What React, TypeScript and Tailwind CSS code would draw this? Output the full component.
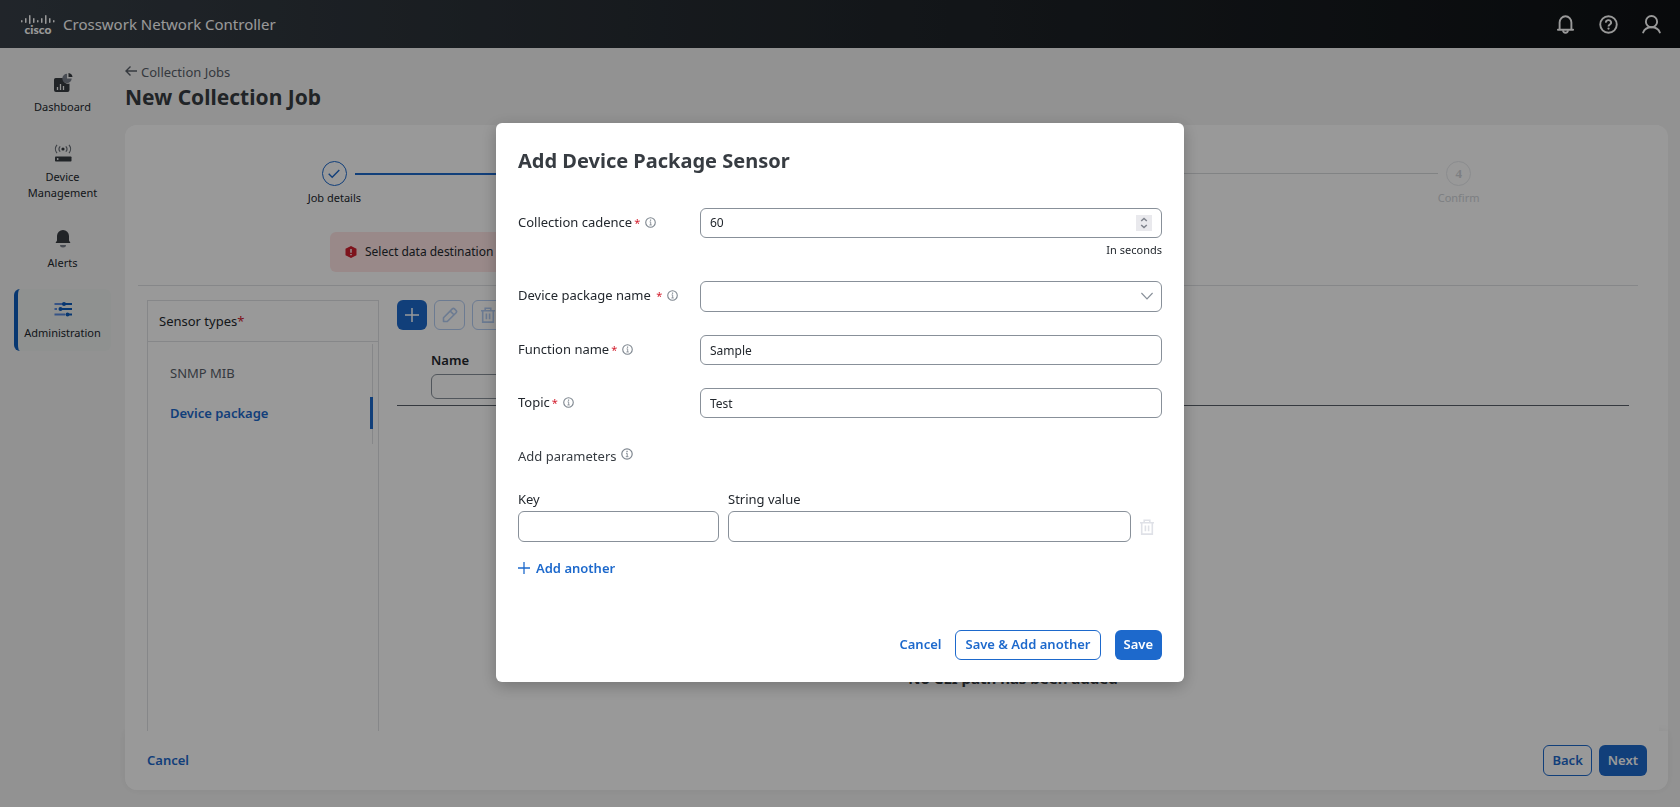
import React from "react";
import clsx from "clsx";

type IconProps = { className?: string };

function CiscoLogo() {
  const bars = [
    { x: 0, y: 5, h: 2.5 },
    { x: 4, y: 3, h: 5 },
    { x: 8, y: 0, h: 9 },
    { x: 12, y: 3, h: 5 },
    { x: 16, y: 5, h: 2.5 },
    { x: 20, y: 3, h: 5 },
    { x: 24, y: 0, h: 9 },
    { x: 28, y: 3, h: 5 },
    { x: 32, y: 5, h: 2.5 },
  ];
  return (
    <span className="flex w-[34px] flex-col items-center gap-px" aria-label="cisco">
      <svg viewBox="0 0 34 9" className="h-[9px] w-[34px]" fill="currentColor">
        {bars.map((b) => (
          <rect key={b.x} x={b.x} y={b.y} width="1.5" height={b.h} rx="0.75" />
        ))}
      </svg>
      <span className="font-['Lato',sans-serif] text-[12px] leading-[9px] font-black">cisco</span>
    </span>
  );
}

function BellIcon({ className }: IconProps) {
  return (
    <svg viewBox="0 0 20 20" className={className} fill="none" stroke="currentColor" strokeWidth="2">
      <path d="M2 15.5h16M3.800 15.200V8a6.200 6.700 0 0 1 12.400 0v7.200" strokeLinecap="round" />
      <path d="M7.400 16c.2 3.600 5 3.600 5.200 0" />
    </svg>
  );
}

function HelpIcon({ className }: IconProps) {
  return (
    <svg viewBox="0 0 20 20" className={className} fill="none" stroke="currentColor" strokeWidth="2">
      <circle cx="10" cy="10" r="8.700" />
      <path d="M7.300 8a2.700 2.500 0 1 1 4 2.100c-.9.5-1.300.8-1.300 1.900" />
      <circle cx="10" cy="14.300" r="1.200" fill="currentColor" stroke="none" />
    </svg>
  );
}

function UserIcon({ className }: IconProps) {
  return (
    <svg viewBox="0 0 20 20" className={className} fill="none" stroke="currentColor" strokeWidth="2">
      <circle cx="10" cy="7" r="5.900" />
      <path d="M1.200 18.400c1.200-3.200 4.500-5.500 8.800-5.500s7.600 2.300 8.800 5.500" strokeLinecap="round" />
    </svg>
  );
}

function InfoIcon({ className }: IconProps) {
  return (
    <svg viewBox="0 0 12 12" className={className} fill="none" stroke="currentColor">
      <circle cx="6" cy="6" r="5.200" strokeWidth="1.200" />
      <path d="M5 5.300H6.200V8.700M4.800 8.700h2.600" strokeWidth="0.9" />
      <rect x="5.400" y="2.800" width="1.300" height="1.300" fill="currentColor" stroke="none" />
    </svg>
  );
}

function TrashIcon({ className }: IconProps) {
  return (
    <svg viewBox="0 0 14 16" className={className} fill="none" stroke="currentColor" strokeWidth="1.600">
      <path d="M0 3.700h14M4.200 3.500V1.200h5.600v2.300M1.700 3.700v11.400h10.600V3.700M5.400 6.500v5.800M8.600 6.500v5.800" />
    </svg>
  );
}

function PencilIcon({ className }: IconProps) {
  return (
    <svg viewBox="0 0 16 16" className={className} fill="none" stroke="currentColor" strokeWidth="1.600" strokeLinejoin="round">
      <path d="M1.500 14.500v-3.800L10.300 1.900a1.600 1.600 0 0 1 2.200 0l1.600 1.600a1.600 1.600 0 0 1 0 2.200L5.300 14.500zM8.300 4.100l3.600 3.600" />
    </svg>
  );
}

function PlusIcon({ className }: IconProps) {
  return (
    <svg viewBox="0 0 14 14" className={className} fill="none" stroke="currentColor" strokeWidth="1.500">
      <path d="M7 0v14M0 7h14" />
    </svg>
  );
}

function DashboardIcon() {
  return (
    <svg viewBox="0 0 20 20" className="h-5 w-5">
      <path
        d="M3.500 5H10a5 5 0 0 0 6.500 5.500V17a2 2 0 0 1-2 2H3a2 2 0 0 1-2-2V7a2 2 0 0 1 2.500-2z"
        fill="#373c42"
      />
      <path d="M4.500 14V17M7.500 11v6M10.500 13v4" stroke="#f4f5f6" strokeWidth="1.300" />
      <path d="M14 .8v4.700h4.700A4.700 4.700 0 1 1 14 .8z" fill="#7b808c" />
      <path d="M15.500 0A4.500 4.500 0 0 1 19.500 4h-4z" fill="#373c42" />
    </svg>
  );
}

function DeviceIcon() {
  return (
    <svg viewBox="0 0 18 18" className="h-[18px] w-[18px]" fill="none">
      <rect x="1" y="12.500" width="16.500" height="5" rx="0.800" fill="#373c42" />
      <circle cx="3.700" cy="15" r="0.900" fill="#f4f5f6" />
      <circle cx="9" cy="5" r="1.600" fill="#373c42" />
      <path
        d="M6.200 2.300a4 4 0 0 0 0 5.400M11.800 2.300a4 4 0 0 1 0 5.400M3 .8a6.500 6.500 0 0 0 0 8.400M15 .8a6.500 6.500 0 0 1 0 8.400"
        stroke="#6a7078"
        strokeWidth="1.200"
      />
    </svg>
  );
}

function AlertsIcon() {
  return (
    <svg viewBox="0 0 18 18" className="h-[18px] w-[18px]">
      <path d="M9 0a6 6 0 0 1 6 6v4.500l1.500 2.500H1.500L3 10.500V6a6 6 0 0 1 6-6z" fill="#373c42" />
      <path d="M6 15h6a3 2.500 0 0 1-6 0z" fill="#7b808c" />
    </svg>
  );
}

function AdminIcon() {
  return (
    <svg viewBox="0 0 18 16" className="h-4 w-[18px]">
      <path d="M.5 3H9M.5 8H3M.5 13.500H11" stroke="#5b8adf" strokeWidth="1.800" />
      <path d="M9 3h9M6 8h12M13 13.500h5" stroke="#0d5cbd" strokeWidth="1.800" />
      <circle cx="10" cy="3" r="2" fill="#0d5cbd" />
      <circle cx="6.500" cy="8" r="2" fill="#0d5cbd" />
      <circle cx="13.500" cy="13.500" r="2" fill="#0d5cbd" />
    </svg>
  );
}

const navItems = [
  { label: "Dashboard", icon: <DashboardIcon /> },
  { label: "Device Management", icon: <DeviceIcon /> },
  { label: "Alerts", icon: <AlertsIcon /> },
  { label: "Administration", icon: <AdminIcon />, active: true },
];

function Header() {
  return (
    <header className="flex h-12 shrink-0 items-center justify-between bg-linear-to-r from-[#373f47] to-[#0e1114] pr-[19px] pl-[21px] text-white">
      <div className="flex items-center gap-2">
        <CiscoLogo />
        <span className="text-[15px]">Crosswork Network Controller</span>
      </div>
      <div className="flex items-center gap-6">
        <button type="button" aria-label="Notifications">
          <BellIcon className="h-[19px] w-[19px]" />
        </button>
        <button type="button" aria-label="Help">
          <HelpIcon className="h-[19px] w-[19px]" />
        </button>
        <button type="button" aria-label="Account">
          <UserIcon className="h-[19px] w-[19px]" />
        </button>
      </div>
    </header>
  );
}

function Sidebar() {
  return (
    <nav className="flex w-[125px] shrink-0 flex-col gap-2 px-3.5 pt-[15px]">
      {navItems.map((item) => (
        <a
          key={item.label}
          href="#"
          className={clsx(
            "flex flex-col items-center rounded-md border-l-4 py-2.5 pr-1 text-center text-[11px] leading-4 text-[#23282e]",
            item.active ? "border-[#0d5cbd] bg-[#eff2f1]" : "border-transparent",
          )}
        >
          <span className="mb-1.5 flex h-5 items-center">{item.icon}</span>
          {item.label}
        </a>
      ))}
    </nav>
  );
}

function Stepper() {
  return (
    <ol className="grid grid-cols-4 px-[22px] pt-9 text-[11px] leading-4">
      <li className="relative flex flex-col items-center gap-1 text-[#23282e]">
        <span className="flex h-[25px] w-[25px] items-center justify-center rounded-full border border-[#1d69cc] text-[#1d69cc]">
          <svg viewBox="0 0 12 10" className="h-[10px] w-3" fill="none" stroke="currentColor" strokeWidth="1.400">
            <path d="M.7 4.800 4.200 8.300 11.300 1" />
          </svg>
        </span>
        Job details
        <span className="absolute top-3 left-1/2 ml-[21px] h-0.5 w-[calc(100%-42px)] bg-[#1d69cc]" />
      </li>
      <li className="relative flex flex-col items-center">
        <span className="h-[25px] w-[25px] rounded-full bg-[#1d69cc]" />
      </li>
      <li className="relative flex flex-col items-center">
        <span className="h-[25px] w-[25px] rounded-full border border-[#e8eaee]" />
        <span className="absolute top-3 left-1/2 ml-[21px] h-px w-[calc(100%-42px)] bg-[#d8dadd]" />
      </li>
      <li className="flex flex-col items-center gap-1 text-[#d0d4d9]">
        <span className="flex h-[25px] w-[25px] items-center justify-center rounded-full border border-[#e8eaee] font-['Liberation_Serif',serif] text-[13px] font-bold">
          4
        </span>
        Confirm
      </li>
    </ol>
  );
}

function SensorTypes() {
  return (
    <section className="flex w-[232px] shrink-0 flex-col border border-b-0 border-[#dfe1e4]">
      <h2 className="border-b border-[#dfe1e4] px-[11px] py-2.5 text-[13px] leading-5 text-[#23282e]">
        Sensor types<span className="text-[#d32030]">*</span>
      </h2>
      <div className="mt-0.5 mr-[5px] flex flex-col border-r border-[#dfe1e4] py-2.5 pl-[22px] text-[13px]">
        <button type="button" className="h-10 text-left text-[#596069]">
          SNMP MIB
        </button>
        <button
          type="button"
          className="relative h-10 text-left font-semibold text-[#1d69cc] after:absolute after:top-[3px] after:-right-px after:h-8 after:w-[3px] after:bg-[#1d69cc]"
        >
          Device package
        </button>
      </div>
    </section>
  );
}

function SensorTable() {
  return (
    <section className="flex min-w-0 flex-1 flex-col">
      <div className="flex gap-[7px]">
        <button
          type="button"
          aria-label="Add"
          className="flex h-[30px] w-[30px] items-center justify-center rounded-md bg-[#1d69cc] text-white"
        >
          <PlusIcon className="h-3.5 w-3.5" />
        </button>
        <button
          type="button"
          aria-label="Edit"
          className="flex h-[30px] w-[31px] items-center justify-center rounded-md border border-[#b4cdf3] text-[#b4cdf3]"
        >
          <PencilIcon className="h-4 w-4" />
        </button>
        <button
          type="button"
          aria-label="Delete"
          className="flex h-[30px] w-[31px] items-center justify-center rounded-md border border-[#b4cdf3] text-[#b4cdf3]"
        >
          <TrashIcon className="h-4 w-3.5" />
        </button>
      </div>
      <div className="mt-5 border-b border-[#596069] pb-1.5 pl-[34px]">
        <label htmlFor="filter-name" className="block text-[13px] leading-5 font-semibold text-[#23282e]">
          Name
        </label>
        <input
          id="filter-name"
          className="mt-1 block h-[25px] w-64 rounded-md border border-[#889099] bg-white px-2 text-[12px]"
        />
      </div>
      <p className="mt-[260px] text-center text-[15px] leading-6 font-bold text-[#373c42]">
        No CLI path has been added
      </p>
    </section>
  );
}

function CollectionJobPage() {
  return (
    <main className="flex min-w-0 flex-1 flex-col pr-3 pb-[17px] text-[13px]">
      <a href="#" className="mt-3.5 flex items-center gap-1 leading-5 text-[#596069]">
        <svg viewBox="0 0 12 12" className="mb-0.5 h-3 w-3" fill="none" stroke="currentColor" strokeWidth="1.400">
          <path d="M12 6H1M5.500 1.500 1 6l4.500 4.500" />
        </svg>
        Collection Jobs
      </a>
      <h1 className="mb-3.5 pt-px text-[21px] leading-7 font-bold text-[#373c42]">New Collection Job</h1>
      <div className="flex min-h-0 flex-1 flex-col rounded-xl bg-white">
        <div className="relative z-10 mr-[9px] flex min-h-0 flex-1 flex-col overflow-hidden rounded-tl-xl bg-white">
          <div className="-mr-[9px]">
            <Stepper />
          </div>
          <div className="mt-[26px] ml-[205px] flex h-10 w-[600px] shrink-0 items-center gap-2 rounded-md bg-[#ffe5e5] px-[15px] text-[12px] text-[#23282e]">
            <svg viewBox="0 0 12 12" className="h-3 w-3">
              <path d="M6 0l5.500 2.700v6.600L6 12 .5 9.300V2.700z" fill="#d32030" />
              <path d="M6 3v3.700M6 8v1.300" stroke="#fff" strokeWidth="1.400" />
            </svg>
            Select data destination
          </div>
          <hr className="mt-[13px] mr-[21px] ml-[13px] border-[#dfe1e4]" />
          <div className="mt-3.5 mr-[30px] ml-[22px] flex min-h-0 flex-1 gap-[18px]">
            <SensorTypes />
            <SensorTable />
          </div>
        </div>
        <footer className="flex h-[59px] shrink-0 items-center justify-between rounded-b-xl bg-white pr-[21px] pl-[22px] font-semibold shadow-[0_0_8px_rgba(0,0,0,0.06)]">
          <button type="button" className="text-[#1d69cc]">
            Cancel
          </button>
          <div className="flex gap-[7px]">
            <button type="button" className="h-[31px] rounded-md border border-[#1d69cc] px-2 text-[#1d69cc]">
              Back
            </button>
            <button type="button" className="h-[31px] rounded-md bg-[#1d69cc] px-[9px] text-white">
              Next
            </button>
          </div>
        </footer>
      </div>
    </main>
  );
}

function FieldLabel({ htmlFor, children }: { htmlFor: string; children: React.ReactNode }) {
  return (
    <div className="flex h-[30px] w-[182px] shrink-0 items-center gap-[5px]">
      <label htmlFor={htmlFor}>
        {children}
        <span className="ml-0.5 text-[11px] text-[#d32030]">*</span>
      </label>
      <InfoIcon className="mb-0.5 h-[11px] w-[11px] text-[#7e868f]" />
    </div>
  );
}

const inputClass = "h-[30px] min-w-0 flex-1 rounded-md border border-[#889099] bg-white px-[9px] text-[12px]";

function AddSensorDialog() {
  return (
    <div
      role="dialog"
      aria-labelledby="dialog-title"
      className="w-full max-w-[688px] rounded-md bg-white px-[22px] pt-6 pb-[22px] text-[13px] text-[#23282e] shadow-[0_4px_16px_rgba(0,0,0,0.25)]"
    >
      <h2 id="dialog-title" className="text-[20px] leading-7 font-bold text-[#373c42]">
        Add Device Package Sensor
      </h2>
      <form className="mt-[33px]" onSubmit={(e) => e.preventDefault()}>
        <div className="flex flex-col gap-[23px]">
          <div>
            <div className="flex">
              <FieldLabel htmlFor="cadence">Collection cadence</FieldLabel>
              <div className="flex h-[30px] min-w-0 flex-1 items-center rounded-md border border-[#889099] px-[9px]">
                <input
                  id="cadence"
                  type="number"
                  defaultValue={60}
                  className="min-w-0 flex-1 text-[12px] outline-none [appearance:textfield] [&::-webkit-inner-spin-button]:appearance-none"
                />
                <span className="flex h-4 w-4 items-center justify-center bg-[#e9e9ed] text-[#7e828c]">
                  <svg viewBox="0 0 8 12" className="h-3 w-2" fill="none" stroke="currentColor" strokeWidth="1.500">
                    <path d="M1.200 4 4 1.500 6.800 4M1.200 8 4 10.500 6.800 8" />
                  </svg>
                </span>
              </div>
            </div>
            <p className="mt-1 text-right text-[11px] leading-4">In seconds</p>
          </div>
          <div className="flex">
            <FieldLabel htmlFor="package">Device package name&nbsp;</FieldLabel>
            <div className="relative flex min-w-0 flex-1">
              <select
                id="package"
                className="h-[31px] w-full appearance-none rounded-md border border-[#889099] bg-white px-[9px] text-[12px]"
              >
                <option></option>
              </select>
              <svg
                viewBox="0 0 12 8"
                className="pointer-events-none absolute top-[11px] right-[9px] h-2 w-3"
                fill="none"
                stroke="#889099"
                strokeWidth="1.200"
              >
                <path d="M.4 1 6 6.800 11.600 1" />
              </svg>
            </div>
          </div>
          <div className="flex">
            <FieldLabel htmlFor="function">Function name</FieldLabel>
            <input id="function" defaultValue="Sample" className={inputClass} />
          </div>
          <div className="flex">
            <FieldLabel htmlFor="topic">Topic</FieldLabel>
            <input id="topic" defaultValue="Test" className={inputClass} />
          </div>
        </div>

        <h3 className="mt-7 flex items-center gap-[5px] leading-5 text-[#373c42]">
          Add parameters
          <InfoIcon className="mb-1 h-3 w-3 text-[#7e868f]" />
        </h3>

        <div className="mt-[23px] flex items-end gap-[9px]">
          <div className="flex w-[201px] shrink-0 flex-col gap-0.5">
            <label htmlFor="param-key" className="leading-5">
              Key
            </label>
            <input id="param-key" className="h-[31px] rounded-md border border-[#889099] px-[9px]" />
          </div>
          <div className="flex min-w-0 flex-1 flex-col gap-0.5">
            <label htmlFor="param-value" className="leading-5">
              String value
            </label>
            <input id="param-value" className="h-[31px] rounded-md border border-[#889099] px-[9px]" />
          </div>
          <button type="button" aria-label="Remove parameter" className="mr-2 flex h-[31px] items-center text-[#dfe1e7]">
            <TrashIcon className="h-4 w-3.5" />
          </button>
        </div>

        <button type="button" className="mt-4 flex items-center gap-1.5 leading-5 font-semibold text-[#1d69cc]">
          <PlusIcon className="h-3 w-3" />
          Add another
        </button>

        <div className="mt-[52px] flex items-center justify-end gap-3.5 font-semibold">
          <button type="button" className="text-[#1d69cc]">
            Cancel
          </button>
          <button type="button" className="h-[30px] rounded-md border border-[#1d69cc] px-[9px] text-[#1d69cc]">
            Save &amp; Add another
          </button>
          <button type="submit" className="h-[30px] rounded-md bg-[#1d69cc] px-[9px] text-white">
            Save
          </button>
        </div>
      </form>
    </div>
  );
}

export default function App() {
  return (
    <div className="flex h-screen flex-col bg-[#f4f4f4] font-['Noto_Sans','Open_Sans',sans-serif]">
      <Header />
      <div className="flex min-h-0 flex-1">
        <Sidebar />
        <CollectionJobPage />
      </div>
      <div className="fixed inset-0 z-20 flex items-center justify-center bg-black/40 pb-0.5">
        <AddSensorDialog />
      </div>
    </div>
  );
}
